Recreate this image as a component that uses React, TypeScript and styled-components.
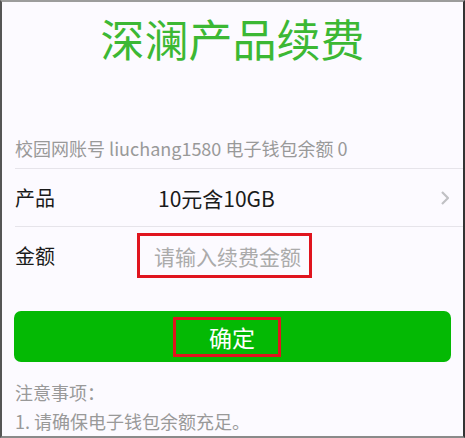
import React from "react";
import styled, { createGlobalStyle } from "styled-components";

const GlobalStyle = createGlobalStyle`
  html, body {
    margin: 0;
    padding: 0;
    background: #fcfaff;
  }
  * {
    box-sizing: border-box;
  }
`;

const App = () => {
  return (
    <>
      <GlobalStyle />
      <Frame>
        <Title>深澜产品续费</Title>
        <AccountInfo>校园网账号 liuchang1580 电子钱包余额 0</AccountInfo>
        <FormList>
          <FormRow>
            <Label>产品</Label>
            <ProductValue>10元含10GB</ProductValue>
            <Chevron viewBox="0 0 8 14">
              <path d="M1 1l6 6-6 6" />
            </Chevron>
          </FormRow>
          <FormRow>
            <Label>金额</Label>
            <AmountBox>
              <AmountInput placeholder="请输入续费金额" />
            </AmountBox>
          </FormRow>
        </FormList>
        <ConfirmButton>
          <ButtonLabel>确定</ButtonLabel>
        </ConfirmButton>
        <Notes>
          <NoteLine>注意事项：</NoteLine>
          <NoteLine>1. 请确保电子钱包余额充足。</NoteLine>
        </Notes>
      </Frame>
    </>
  );
};

const Frame = styled.div`
  width: 465px;
  height: 438px;
  overflow: hidden;
  display: flex;
  flex-direction: column;
  background: #fcfaff;
  border-top: 2px solid #9c9c9c;
  border-left: 2px solid #555;
  border-right: 2px solid #333;
  border-bottom: 2px solid #8a8a8a;
  font-family: "Noto Sans CJK SC", "Noto Sans", sans-serif;
`;

const Title = styled.h1`
  margin: 9px 0 0;
  text-align: center;
  font-size: 44px;
  line-height: 54px;
  font-weight: 400;
  color: #3cb834;
`;

const AccountInfo = styled.p`
  margin: 71px 0 0;
  padding: 0 0 8px 13px;
  font-size: 18px;
  line-height: 24px;
  color: #999;
`;

const FormList = styled.div`
  margin-left: 13px;
  display: flex;
  flex-direction: column;
`;

const FormRow = styled.div`
  display: flex;
  align-items: center;
  height: 58px;
  border-top: 1px solid #e6e4ea;
`;

const Label = styled.span`
  width: 122px;
  font-size: 20px;
  color: #1a1a1a;
`;

const ProductValue = styled.span`
  flex: 1;
  padding-left: 21px;
  font-size: 21px;
  color: #1a1a1a;
`;

const Chevron = styled.svg`
  width: 8px;
  height: 14px;
  margin-right: 14px;
  fill: none;
  stroke: #c0c0c4;
  stroke-width: 2.2;
`;

const AmountBox = styled.div`
  width: 175px;
  height: 45px;
  border: 3px solid #e0141e;
  display: flex;
  align-items: center;
  padding-left: 14px;
`;

const AmountInput = styled.input`
  width: 100%;
  border: none;
  outline: none;
  background: transparent;
  padding: 0;
  font-family: "Noto Sans CJK SC", sans-serif;
  font-size: 21px;
  color: #333;
  &::placeholder {
    color: #ababab;
  }
`;

const ConfirmButton = styled.button`
  margin: 27px 12px 0 12px;
  height: 55px;
  border: none;
  border-radius: 7px;
  background: #04b904;
  display: flex;
  align-items: center;
  justify-content: center;
  padding: 0;
`;

const ButtonLabel = styled.span`
  width: 108px;
  height: 40px;
  margin-right: 12px;
  padding-left: 11px;
  border: 3px solid #e2141e;
  display: flex;
  align-items: center;
  justify-content: center;
  font-family: "Noto Sans CJK SC", sans-serif;
  font-size: 23px;
  color: #fff;
`;

const Notes = styled.div`
  margin-top: 16px;
  padding-left: 13px;
  display: flex;
  flex-direction: column;
`;

const NoteLine = styled.span`
  font-size: 18px;
  line-height: 29px;
  color: #999;
`;

export default App;
